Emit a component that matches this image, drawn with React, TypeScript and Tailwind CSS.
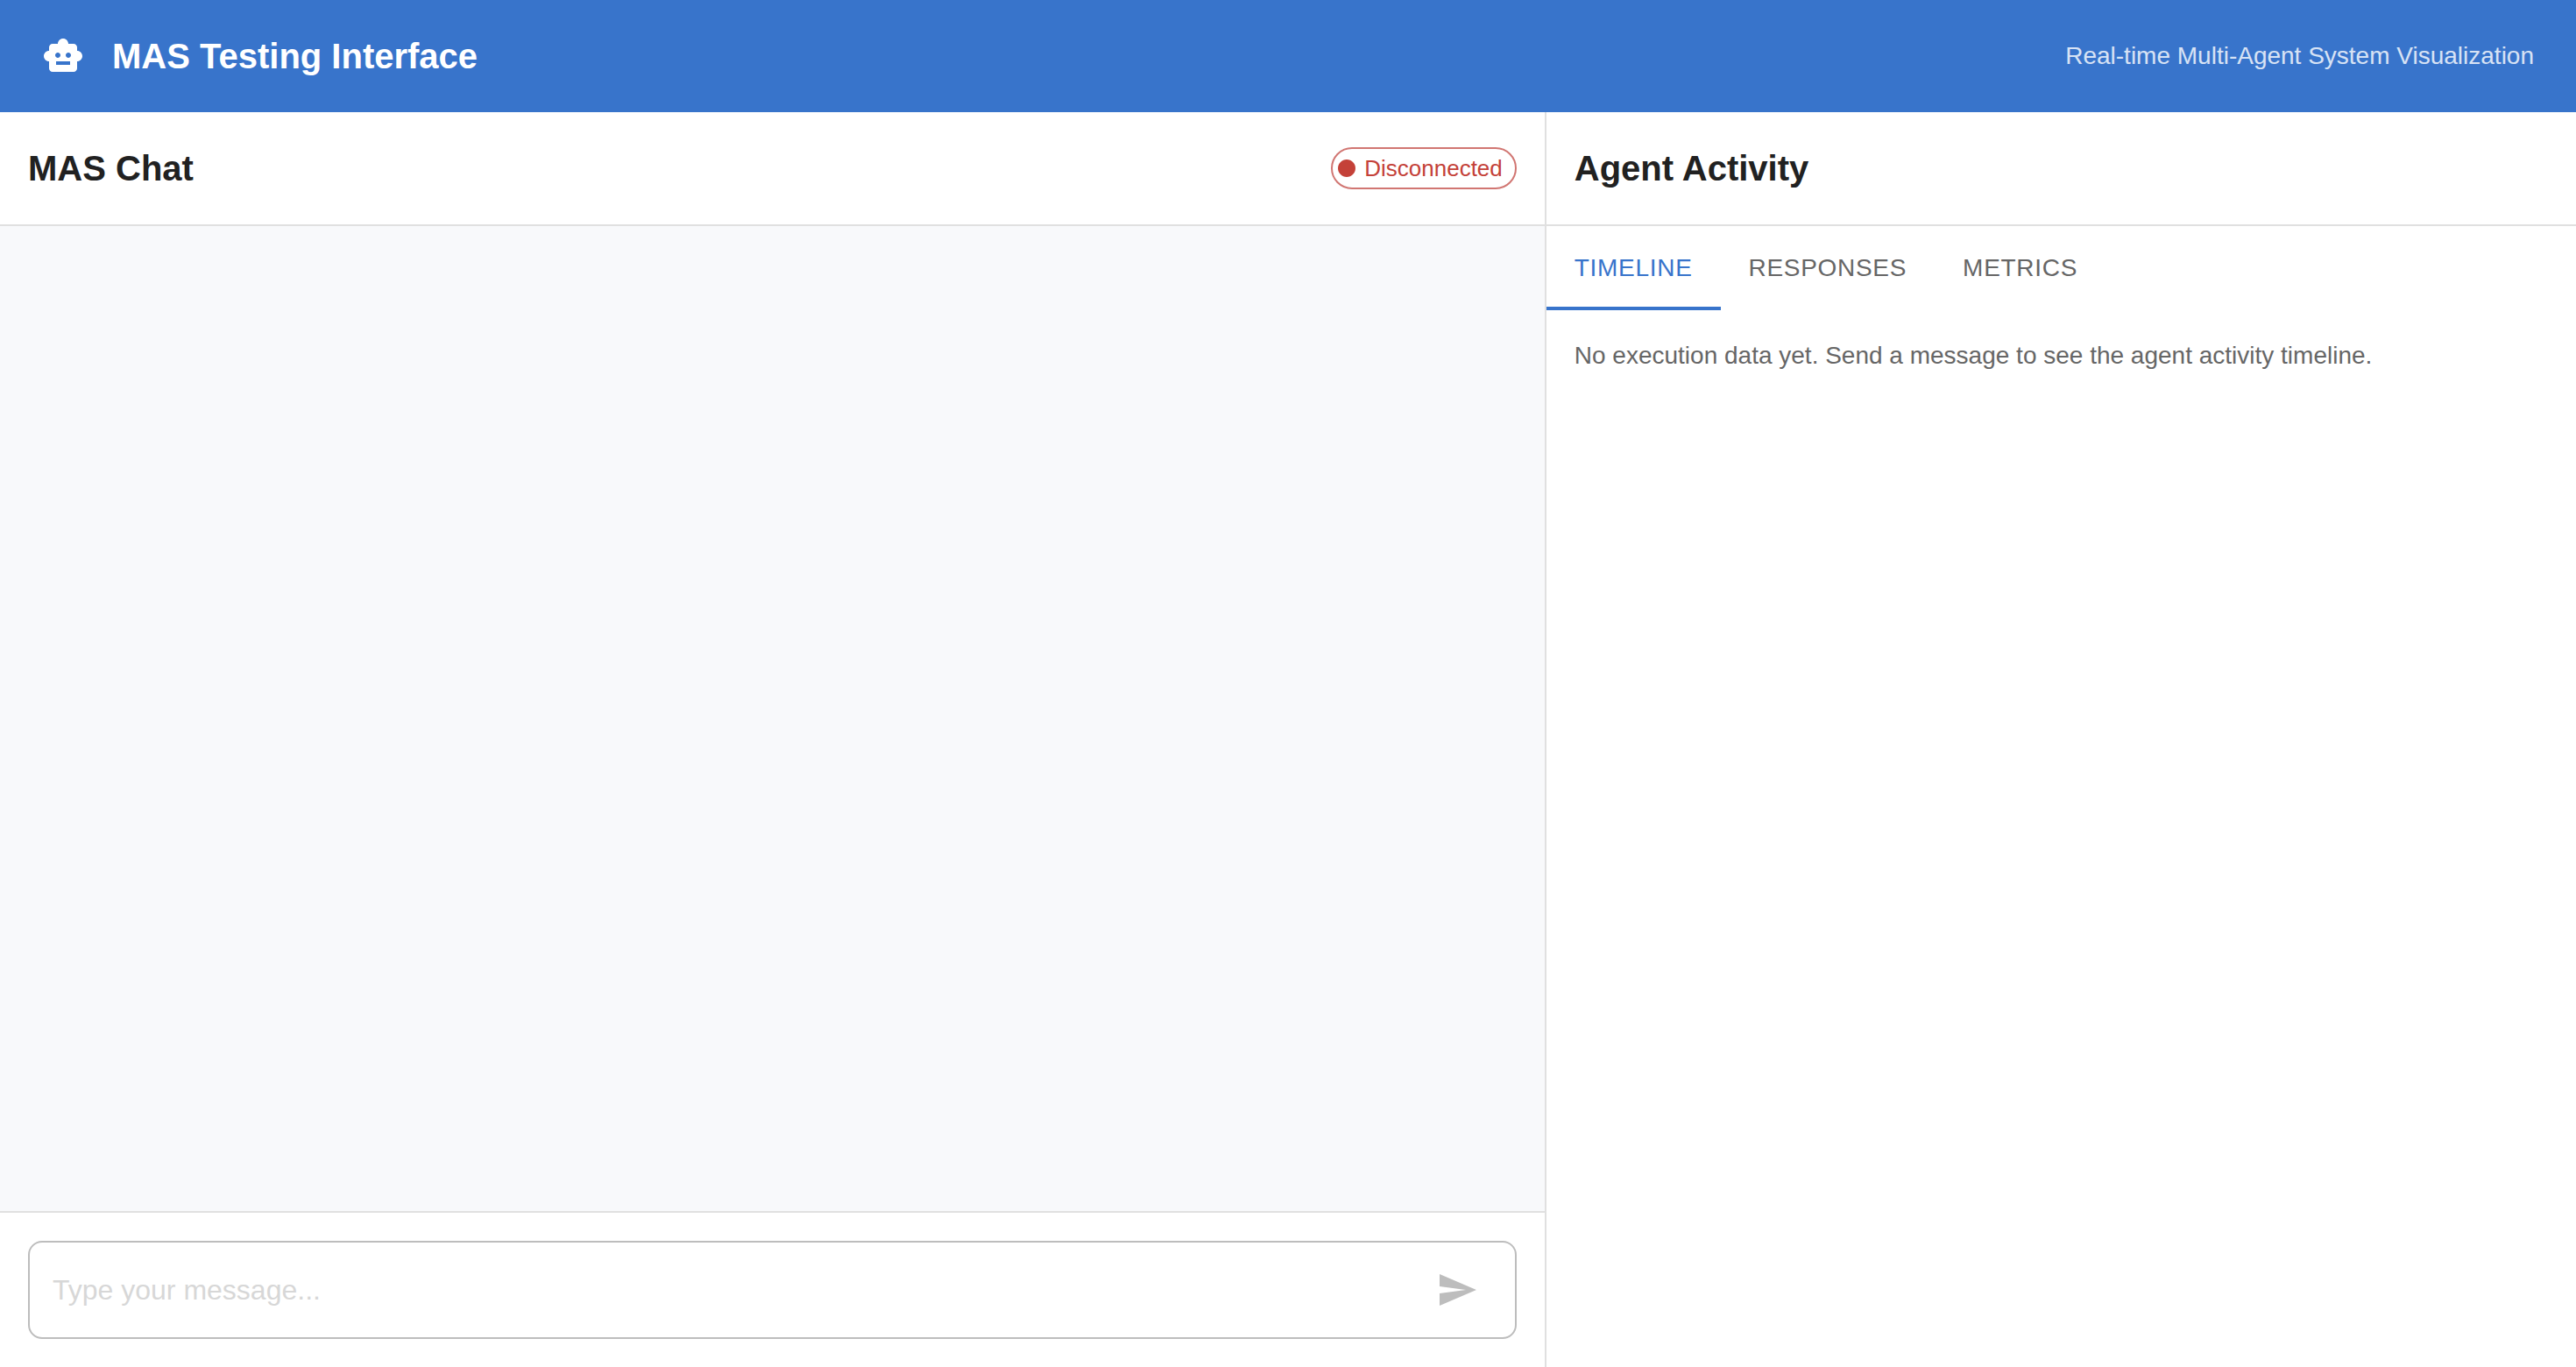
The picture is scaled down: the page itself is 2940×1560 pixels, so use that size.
import { useState } from "react";
import { MdCircle, MdSend, MdSmartToy } from "react-icons/md";

const tabs = ["Timeline", "Responses", "Metrics"];

const emptyText: Record<string, string> = {
  Timeline: "No execution data yet. Send a message to see the agent activity timeline.",
  Responses: "No agent responses yet.",
  Metrics: "No metrics yet.",
};

function ChatPanel() {
  const [message, setMessage] = useState("");
  return (
    <section className="flex min-w-0 flex-3 flex-col border-r-2 border-[#e0e0e0]">
      <div className="flex items-center justify-between border-b-2 border-[#e0e0e0] p-8">
        <h2 className="text-[40px] leading-[64px] font-bold">MAS Chat</h2>
        <div className="flex h-12 items-center gap-2 rounded-full border-2 border-[#d17672] pr-[14px] pl-1 text-[26px] text-[#c44138]">
          <MdCircle className="size-6" aria-hidden="true" />
          <span>Disconnected</span>
        </div>
      </div>
      <div className="flex-1 overflow-y-auto bg-[#f8f9fb]" />
      <form
        className="border-t-2 border-[#e0e0e0] p-8"
        onSubmit={(event) => {
          event.preventDefault();
          setMessage("");
        }}
      >
        <div className="flex h-28 items-center rounded-2xl border-2 border-[#bdbdbd] px-[26px]">
          <input
            type="text"
            aria-label="Message"
            placeholder="Type your message..."
            value={message}
            onChange={(event) => setMessage(event.target.value)}
            className="min-w-0 flex-1 text-[32px] leading-[46px] outline-none placeholder:text-[#d7d7d7]"
          />
          <button type="submit" aria-label="Send message" className="rounded-full p-4 text-[#bdbdbd]">
            <MdSend className="size-12" />
          </button>
        </div>
      </form>
    </section>
  );
}

function ActivityPanel() {
  const [active, setActive] = useState("Timeline");
  return (
    <section className="flex min-w-0 flex-2 flex-col">
      <div className="border-b-2 border-[#e0e0e0] p-8">
        <h2 className="text-[40px] leading-[64px] font-bold">Agent Activity</h2>
      </div>
      <div role="tablist" className="flex">
        {tabs.map((tab) => (
          <button
            key={tab}
            type="button"
            role="tab"
            aria-selected={active === tab}
            onClick={() => setActive(tab)}
            className={
              active === tab
                ? "h-24 border-b-4 border-[#3874cb] px-8 pt-1 text-[28px] tracking-wide text-[#3874cb] uppercase"
                : "h-24 border-b-4 border-transparent px-8 pt-1 text-[28px] tracking-wide text-[#666666] uppercase"
            }
          >
            {tab}
          </button>
        ))}
      </div>
      <div role="tabpanel" className="p-8">
        <p className="text-[28px] leading-10 text-[#666666]">{emptyText[active]}</p>
      </div>
    </section>
  );
}

export default function App() {
  return (
    <div className="flex h-screen flex-col bg-white font-['Liberation_Sans',Arial,sans-serif] text-[#212121]">
      <header className="flex h-32 shrink-0 items-center gap-8 bg-[#3874cb] px-12 text-white">
        <MdSmartToy className="size-12" aria-hidden="true" />
        <h1 className="flex-1 text-[40px] leading-[64px] font-bold">MAS Testing Interface</h1>
        <p className="text-[28px] leading-10 text-white/80">Real-time Multi-Agent System Visualization</p>
      </header>
      <main className="flex min-h-0 flex-1">
        <ChatPanel />
        <ActivityPanel />
      </main>
    </div>
  );
}
